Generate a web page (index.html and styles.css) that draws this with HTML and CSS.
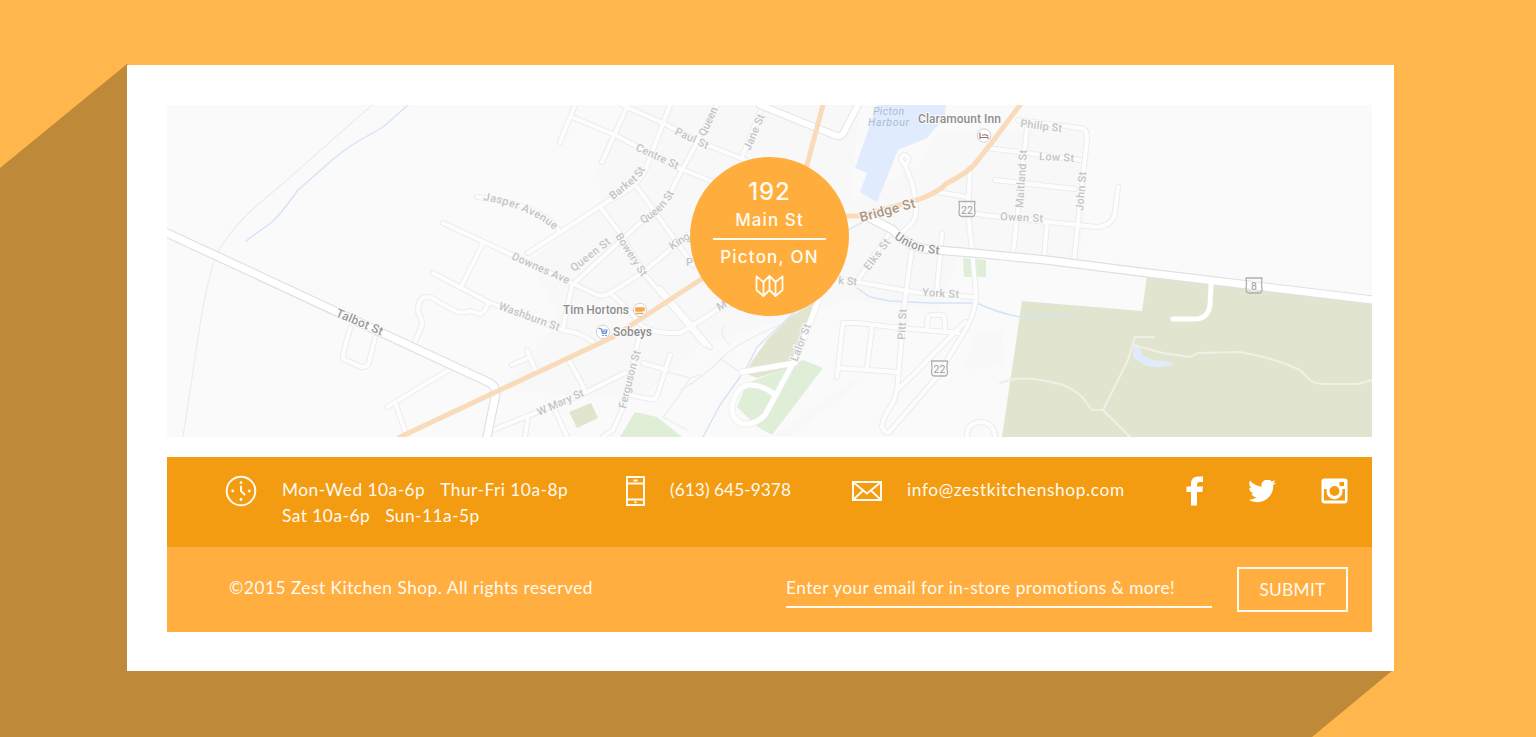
FILE: index.html
```html
<!DOCTYPE html>
<html lang="en">
<head>
<meta charset="utf-8">
<title>Zest Kitchen Shop</title>
<link rel="stylesheet" href="styles.css">
</head>
<body>
<div class="long-shadow"></div>
<main class="card">
  <section class="map-wrap">
    <svg class="map" viewBox="167 105 1205 332" role="img" aria-label="Map of Picton">
      <defs>
        <g id="minor">
          <path d="M350 328L343 355Q342 360 348 361L361 367Q367 368 369 362L375 338"/>
          <path d="M415 342L422 325Q422 318 418 312Q418 298 426 297Q432 297 437 301L455 311Q463 314 470 311L480 314Q486 312 488 302"/>
          <path d="M452 368L387 407M395 402L407 437"/>
          <path d="M443 223L512 255L597 295Q604 297 610 293L642 273L690 233"/>
          <path d="M483 243L462 285M433 273L488 302L562 330Q580 332 593 342"/>
          <path d="M528 253L610 200Q638 188 646 168L670 105M477 197Q545 205 560 232"/>
          <path d="M575 105L560 142M572 117L615 135L678 168L755 198M622 105L663 123L700 142L760 166M628 105L602 162"/>
          <path d="M717 105L675 183Q665 210 640 223L572 285L563 328"/>
          <path d="M600 207L620 233L647 277L705 345M637 187L673 237L693 265"/>
          <path d="M610 293Q630 310 640 324Q652 334 680 333L717 310L760 290M660 288L710 347"/>
          <path d="M527 350L535 370M512 365L530 357M570 362L585 390M493 430L585 393L625 373M528 417L525 437M555 410L567 437"/>
          <path d="M640 333L622 410L613 430L603 437M643 363L667 370M670 355L657 396Q655 400 650 399L630 395"/>
          <path d="M742 157L763 105"/>
          <path d="M905 165Q898 160 903 155Q910 155 908 162L905 165L912 183Q920 215 912 223L903 232M890 232L858 280M840 279L920 293L973 297"/>
          <path d="M912 248L905 300L897 390M942 233L937 290M970 168L968 213L972 250L976 295Q976 310 967 327L937 377L890 431Q886 436 882 427Q882 418 893 403L897 390L913 375L965 322"/>
          <path d="M937 192L967 197M968 213L1000 217L1097 227Q1112 226 1115 213L1118 187"/>
          <path d="M1027 128L1013 253M1047 223L1044 257M1018 120L1080 128Q1088 129 1087 139L1074 260M987 148L1080 160M995 180L1075 189"/>
          <path d="M837 377L843 323L857 323L900 328L958 333M872 328L867 367M838 368L897 372M927 327L928 317Q929 314 943 315Q945 315 945 330"/>
          <path d="M967 437Q966 424 980 422Q994 422 995 437"/>
        </g>
        <g id="major">
          <path d="M167 233L490 383Q498 388 495 398L487 437"/>
          <path d="M870 218L893 230Q905 245 925 249L973 253L1046 260L1140 272L1372 300"/>
        </g>
        <g id="lane">
          <path d="M760 105L834 135Q841 138 844 132L858 105"/>
        </g>
        <g id="park-road">
          <path d="M820 296L799 352L777 393L765 415Q756 425 743 424Q731 420 732 407Q735 388 748 385Q762 384 775 395M742 372L795 363"/>
        </g>
        <path id="pJasper" d="M483 200Q528 208 553 229"/>
        <path id="pBarker" d="M613 200L638 180Q645 172 649 160"/>
        <path id="pUnion" d="M894 238Q910 252 944 255"/>
        <path id="pQueen" d="M643 224Q668 210 677 187"/>
        <path id="pFerguson" d="M626 409Q634 372 643 345"/>
        <g id="shield"><path d="M-8 -8L8 -8Q7 -2 8 3Q8 7 5 7L-5 7Q-8 7 -8 3Q-7 -2 -8 -8Z"/></g>
      </defs>
      <rect class="land" x="167" y="105" width="1205" height="332"/>
      <path class="town" d="M625 105H860L850 200 1000 130 1090 130 1080 260 960 250 940 310 850 300 700 345 640 400 500 390 560 320 530 260 600 205 598 160Z"/>
      <path class="town" d="M920 160L940 130 985 130 965 165 930 182ZM790 436L865 378 850 382 775 436ZM965 370L975 335 1002 330 1003 365Z"/>
      <path class="water" d="M877 105L855 168 867 173 860 192 877 202 898 150 927 138 945 117 946 105Z"/>
      <path class="green" d="M620 437L635 412 657 417 682 437ZM803 360L823 368 772 435 758 427 737 407 747 383 783 370ZM963 258L986 260 986 277 964 277Z"/>
      <path class="olive" d="M569 412L591 403 598 418 577 428ZM818 300L790 317 767 340 753 360 745 373 757 378 792 367 807 333Z"/>
      <path class="olive" d="M1022 301L1142 311 1147 276 1372 302V437H1002Z"/>
      <path class="water" d="M1134 344L1140 346 1142 355 1152 360 1172 362 1173 365 1158 367 1147 366 1133 358Z"/>
      <path class="trail" d="M1000 383Q1023 373 1063 385Q1075 390 1083 398L1092 410H1103L1130 437M1103 410L1128 360 1135 337H1154M1133 345L1163 353 1190 357 1198 353 1240 352Q1275 358 1300 370L1310 380Q1316 384 1325 384H1358L1372 380"/>
      <path class="hairline" d="M372 105L287 180 260 203Q240 218 220 248Q210 265 200 325L183 437M667 372L690 378Q680 395 663 417L687 430M680 390Q700 380 720 360Q735 343 780 325M720 358L740 372M724 325Q718 335 730 345M700 375L690 378"/>
      <path class="stream" d="M408 105L383 127 357 142Q340 152 322 169L298 190Q280 215 272 222L246 241M857 288L870 297 890 301 930 303 977 303Q995 312 1020 317L1070 315M797 310L757 347 747 367 720 405 703 437M848 230L863 222"/>
      <use href="#minor" class="minor-edge"/><use href="#minor" class="minor-fill"/>
      <use href="#park-road" class="park-edge"/><use href="#park-road" class="park-fill"/>
      <use href="#lane" class="lane-edge"/><use href="#lane" class="lane-fill"/>
      <use href="#major" class="major-edge"/><use href="#major" class="major-fill"/>
      <path class="drive" d="M1211 284L1210 305Q1208 319 1195 319H1173"/>
      <path class="highway" d="M400 437L613 337 700 280 770 235 807 165 823 105M770 216H860L917 200Q938 193 947 183Q970 172 978 160L990 145 1020 105"/>

      <g class="street">
        <text transform="translate(635 150) rotate(25)" textLength="46">Centre St</text>
        <text transform="translate(674 134) rotate(25)" textLength="36">Paul St</text>
        <text transform="translate(705 137) rotate(-65)" textLength="31">Queen</text>
        <text transform="translate(750 151) rotate(-67)" textLength="38">Jane St</text>
        <text textLength="78"><textPath href="#pJasper">Jasper Avenue</textPath></text>
        <text><textPath href="#pBarker">Barket St</textPath></text>
        <text><textPath href="#pQueen">Queen St</textPath></text>
        <text transform="translate(574 272) rotate(-38)" textLength="47">Queen St</text>
        <text transform="translate(511 259) rotate(24)" textLength="62">Downes Ave</text>
        <text transform="translate(615 236) rotate(57)" textLength="49">Bowery St</text>
        <text transform="translate(672 250) rotate(-32)">King</text>
        <text transform="translate(686 266)">P</text>
        <text transform="translate(719 311) rotate(-27)">M</text>
        <text transform="translate(498 309) rotate(20)" textLength="64">Washburn St</text>
        <text transform="translate(539 416) rotate(-24)" textLength="50">W Mary St</text>
        <text><textPath href="#pFerguson">Ferguson St</textPath></text>
        <text transform="translate(797 362) rotate(-69)" textLength="39">Lalor St</text>
        <text transform="translate(838 284) rotate(5)">k St</text>
        <text transform="translate(869 271) rotate(-53)" textLength="36">Elks St</text>
        <text transform="translate(922 296) rotate(3)" textLength="37">York St</text>
        <text transform="translate(905 340) rotate(-87)" textLength="31">Pitt St</text>
        <text transform="translate(1020 127) rotate(7)" textLength="42">Philip St</text>
        <text transform="translate(1039 160) rotate(3)" textLength="35">Low St</text>
        <text transform="translate(1000 220) rotate(3)" textLength="43">Owen St</text>
        <text transform="translate(1023 208) rotate(-86)" textLength="58">Maitland St</text>
        <text transform="translate(1083 211) rotate(-85)" textLength="39">John St</text>
      </g>
      <g class="road-name">
        <text transform="translate(335 316) rotate(23)" textLength="50">Talbot St</text>
        <text class="union"><textPath href="#pUnion">Union St</textPath></text>
      </g>
      <text class="bridge" transform="translate(861 222) rotate(-15)" textLength="57">Bridge St</text>
      <g class="harbour">
        <text x="873" y="115" textLength="31">Picton</text>
        <text x="868" y="126" textLength="41">Harbour</text>
      </g>
      <g class="place">
        <text x="918" y="123" textLength="83">Claramount Inn</text>
        <text x="563" y="314" textLength="66">Tim Hortons</text>
        <text x="613" y="336" textLength="39">Sobeys</text>
      </g>
      <g class="pin"><circle cx="640" cy="310" r="6.7"/><circle cx="603" cy="332" r="6.7"/><circle cx="984" cy="135.500" r="6.7"/></g>
      <path class="cup" d="M636 308H642V311H636ZM636 309.500H642M642 308H644V310.500H642M636 313.500H643"/>
      <path class="cart" d="M599 328.500H601L602.500 333.500H606L607 330H601.500M602 331.800H606M602.500 335.500H603.500M605.500 335.500H606.500"/>
      <path class="bed" d="M980 133V138.500M980 137.500H988V138.500M982.500 135H984M985 134.500L988 136"/>
      <g class="shields"><use href="#shield" x="967" y="209.500"/><use href="#shield" x="939.500" y="369"/><use href="#shield" x="1254" y="286"/></g>
      <g class="shield-no"><text x="967" y="213.500">22</text><text x="939.500" y="373">22</text><text x="1254" y="290">8</text></g>
    </svg>
    <div class="address">
      <span class="address-no">192</span>
      <span class="address-line">Main St</span>
      <span class="address-rule"></span>
      <span class="address-line city">Picton, ON</span>
      <svg class="fold-map" viewBox="0 0 28 22"><path d="M1 1.500L8 7V21L1 15ZM8 7L14 1V15L8 21M14 1L20 7V21L14 15M20 7L27 1.500V15L20 21"/></svg>
    </div>
  </section>

  <section class="contact">
    <div class="item">
      <svg class="icon clock" viewBox="0 0 32 32"><circle cx="16" cy="16" r="14.300"/><path d="M16 11.500V16L19.500 19.500"/><g class="dots"><circle cx="16" cy="7.700" r="1.400"/><circle cx="16" cy="24.500" r="1.400"/><circle cx="7.700" cy="16" r="1.400"/><circle cx="24.300" cy="16" r="1.400"/></g></svg>
      <p class="text hours"><span class="gap">Mon-Wed 10a-6p</span><span>Thur-Fri 10a-8p</span><br><span class="gap">Sat 10a-6p</span><span>Sun-11a-5p</span></p>
    </div>
    <div class="item">
      <svg class="icon phone" viewBox="0 0 19 30"><path d="M1 1H18V29H1ZM1 7.500H18M1 23.500H18M7.500 4.500H11.500M8.500 26.300H10.500"/></svg>
      <p class="text tel">(613) 645-9378</p>
    </div>
    <div class="item">
      <svg class="icon mail" viewBox="0 0 30 20"><path d="M1 1H29V19H1ZM1.500 1.500L15 12.500 28.500 1.500M1.500 18.500L11 9.500M28.500 18.500L19 9.500"/></svg>
      <p class="text email">info@zestkitchenshop.com</p>
    </div>
    <div class="social">
      <svg class="fb" viewBox="0 0 17 30"><path d="M5 29.500V16H0.500V10.500H5V8Q5 0.500 12 0.500H17V6H13.500Q11 6 11 8.500V10.500H17L16.400 16H11V29.500Z"/></svg>
      <svg class="tw" viewBox="1 3 23 19"><path d="M24 5a9 9 0 0 1-2.700.7A4.700 4.700 0 0 0 23.400 3a9.400 9.400 0 0 1-3 1.200 4.700 4.700 0 0 0-8.100 4.300A13.400 13.400 0 0 1 2.600 3.500a4.700 4.700 0 0 0 1.500 6.300 4.700 4.700 0 0 1-2.100-.6 4.700 4.700 0 0 0 3.800 4.700 4.700 4.700 0 0 1-2.100.1 4.700 4.700 0 0 0 4.400 3.300A9.500 9.500 0 0 1 1.100 19.200 13.400 13.400 0 0 0 8.400 21.400C17.100 21.400 22.200 14 21.700 7.400A9.600 9.600 0 0 0 24 5Z"/></svg>
      <svg class="ig" viewBox="0 0 27 26"><path fill-rule="evenodd" d="M3.500 0.500H23.500Q26.500 0.500 26.500 3.500V22.500Q26.500 25.500 23.500 25.500H3.500Q0.500 25.500 0.500 22.500V3.500Q0.500 0.500 3.500 0.500ZM18.500 4V8H23V4ZM3 11V22.500H24V11H21.200A8 8 0 1 1 5.800 11ZM13.500 8A5 5 0 1 0 13.500 18A5 5 0 1 0 13.500 8Z"/></svg>
    </div>
  </section>

  <footer class="footer">
    <p class="text copy">©2015 Zest Kitchen Shop. All rights reserved</p>
    <form class="signup">
      <label class="field text">Enter your email for in-store promotions &amp; more!</label>
      <button class="submit text" type="button">SUBMIT</button>
    </form>
  </footer>
</main>
</body>
</html>
```
FILE: styles.css
```css
* { box-sizing: border-box; }
body {
  margin: 0;
  height: 737px;
  padding: 65px 142px 66px 127px;
  background: #ffb74d;
  overflow: hidden;
  position: relative;
  font-family: Lato, "Open Sans", sans-serif;
}
.long-shadow {
  position: absolute;
  inset: 0;
  background: #be8a3a;
  clip-path: polygon(127px 64px, 0 168px, 0 100%, 1312px 100%, 1393px 670px);
}
.card {
  position: relative;
  height: 606px;
  padding: 40px 22px 39px 40px;
  background: #fff;
}
.map-wrap {
  position: relative;
  height: 332px;
  margin-bottom: 20px;
}
.map { display: block; width: 1205px; height: 332px; }
.map path, .map use { fill: none; stroke-linecap: round; stroke-linejoin: round; }
.map .land { fill: #fafafa; }
.map .town { fill: #f8f8f8; }
.map .water { fill: #e0ecfd; }
.map .green { fill: #dfeed6; }
.map .olive { fill: #e1e5d0; }
.trail { stroke: #eff1e6; stroke-width: 2; }
.hairline { stroke: #ececec; stroke-width: 1.2; }
.stream { stroke: #d5e2f8; stroke-width: 1.4; }
.minor-edge { stroke: #ececec; stroke-width: 6; }
.minor-fill { stroke: #fdfdfd; stroke-width: 4; }
.park-edge { stroke: #ededea; stroke-width: 6.5; }
.park-fill { stroke: #fff; stroke-width: 5; }
.lane-edge { stroke: #e6e6e6; stroke-width: 8; }
.lane-fill { stroke: #fff; stroke-width: 6; }
.major-edge { stroke: #e0e0e0; stroke-width: 9.5; }
.major-fill { stroke: #fff; stroke-width: 7.2; }
.drive { stroke: #fff; stroke-width: 5; }
.highway { stroke: #fadbb9; stroke-width: 5; }
.map text {
  font-family: Roboto, sans-serif;
  paint-order: stroke;
  stroke: #fafafa;
  stroke-width: 2px;
}
.street { font-size: 11px; font-weight: 500; fill: #c4c4c4; }
.road-name { font-size: 12px; font-weight: 500; fill: #999; }
.union { letter-spacing: 0.5px; }
.bridge { font-size: 13.5px; font-weight: 500; fill: #ab9580; }
.harbour { font-size: 10.5px; font-style: italic; fill: #abbad3; }
.map .harbour text { stroke: none; }
.place { font-size: 12px; font-weight: 500; fill: #8e8e8e; }
.pin { fill: #fff; stroke: #d2d2d2; }
.cup { stroke: #f2a750; stroke-width: 1.6; }
.cart { stroke: #6f93d8; stroke-width: 1.2; }
.bed { stroke: #9b7777; stroke-width: 1.2; }
.map .shields path { fill: #fff; }
.map .shields use { fill: #fff; stroke: #b0b0b0; stroke-width: 1.3; }
.shield-no { font-size: 10.5px; fill: #9d9d9d; text-anchor: middle; }

.address {
  position: absolute;
  left: 523px;
  top: 52px;
  width: 159px;
  height: 159px;
  border-radius: 50%;
  background: #ffae3e;
  display: flex;
  flex-direction: column;
  align-items: center;
  color: #fffbf0;
  font-family: Inter, sans-serif;
  font-weight: 500;
}
.address-no { font-size: 24px; line-height: 28px; margin-top: 21px; letter-spacing: 0.8px; }
.address-line { font-size: 17px; line-height: 20px; margin-top: 4px; letter-spacing: 1.1px; }
.address-rule { width: 113px; height: 2px; margin-top: 8px; background: #fffbf0; }
.city { margin-top: 7px; letter-spacing: 1.2px; }
.fold-map { width: 29px; height: 22px; margin-top: 8px; fill: none; stroke: #fffbf0; stroke-width: 1.8; stroke-linejoin: round; }

.contact {
  display: grid;
  grid-template-columns: 401px 226px 333px 163px;
  height: 90px;
  padding: 19px 23px 0 59px;
  background: #f39c12;
}
.item { display: flex; align-items: flex-start; }
.text { margin: 0; color: #fffaf0; font-size: 17.3px; line-height: 26px; white-space: nowrap; }
.icon { flex: none; fill: none; stroke: #fffaf0; stroke-width: 2; }
.clock { width: 32px; height: 32px; margin: -1px 25px 0 -1px; stroke-linecap: round; }
.dots { fill: #fffaf0; stroke: none; }
.phone { width: 19px; height: 30px; margin: 0 25px 0 -1px; }
.mail { width: 30px; height: 20px; margin: 5px 25px 0 -1px; }
.hours, .tel, .email { margin-top: 1px; }
.hours { letter-spacing: 0.5px; }
.tel { letter-spacing: 0.05px; }
.email { letter-spacing: 0.63px; }
.gap { margin-right: 15px; }
.social { display: flex; align-items: flex-start; fill: #fff; }
.fb { width: 17px; height: 30px; margin-right: 45px; }
.tw { width: 28px; height: 23px; margin: 4px 45px 0 0; }
.ig { width: 27px; height: 26px; margin-top: 2px; }

.footer {
  display: flex;
  justify-content: space-between;
  height: 85px;
  padding: 20px 24px 0 62px;
  background: #ffae3f;
}
.copy { margin-top: 8px; letter-spacing: 0.5px; }
.signup { display: flex; gap: 25px; }
.field { width: 426px; height: 41px; padding-top: 8px; border-bottom: 2px solid #fffaf0; letter-spacing: 0.44px; }
.submit { width: 111px; height: 45px; padding: 0; border: 2px solid #fffaf0; background: none; font-family: inherit; letter-spacing: 0.3px; }
```
